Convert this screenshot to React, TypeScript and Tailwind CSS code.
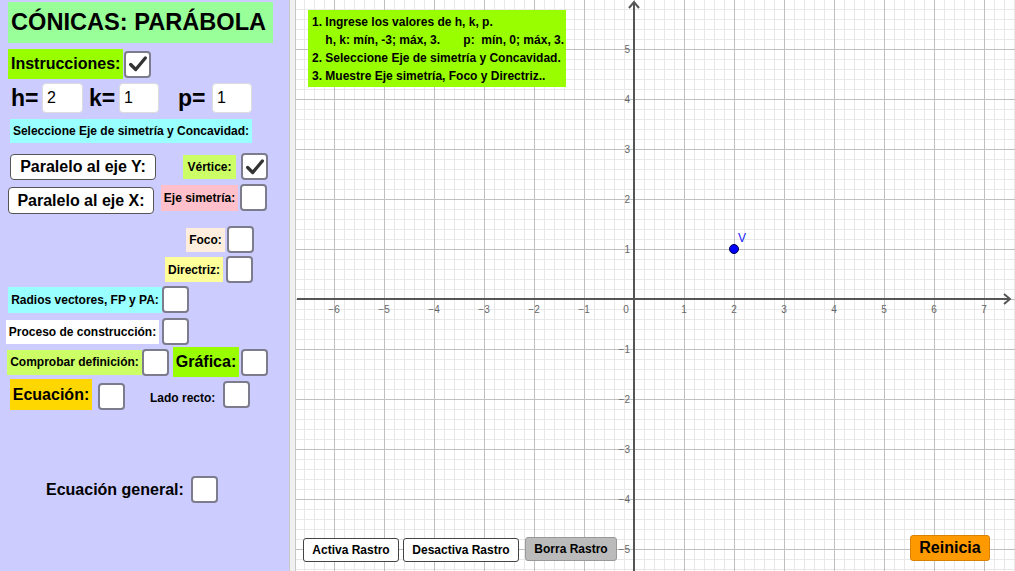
import React from 'react'

// casilla de verificación estilo GeoGebra
function Casilla({ marcada = false, className = '' }: { marcada?: boolean; className?: string }) {
    return (
        <div className={`flex h-[27px] w-[27px] shrink-0 items-center justify-center rounded-[4px] border-2 border-[#7c7c8c] bg-white ${className}`}>
            {marcada && (
                <svg viewBox="0 0 24 24" className="h-[22px] w-[22px]">
                    <polyline points="4,12.5 9.5,18 20,5.5" fill="none" stroke="#333" strokeWidth={3.6} strokeLinecap="round" strokeLinejoin="round" />
                </svg>
            )}
        </div>
    )
}

function Etiqueta({ texto, className }: { texto: string; className: string }) {
    return (
        <div className={`flex shrink-0 items-center justify-center text-[12px] font-bold text-black ${className}`}>
            {texto}
        </div>
    )
}

function Entrada({ valor, className = '' }: { valor: string; className?: string }) {
    return (
        <div className={`flex h-[30px] items-center rounded-[4px] border border-[#dcdcdc] bg-white pl-[4px] text-[16px] font-normal text-black ${className}`}>
            {valor}
        </div>
    )
}

function Grafica() {
    const W = 719
    const H = 571
    const ox = 338
    const oy = 299
    const menoresX: number[] = []
    for (let x = ox % 10; x <= W; x += 10) menoresX.push(x)
    const menoresY: number[] = []
    for (let y = oy % 10; y <= H; y += 10) menoresY.push(y)
    const mayoresX = menoresX.filter((x) => (x - ox) % 50 === 0)
    const mayoresY = menoresY.filter((y) => (y - oy) % 50 === 0)
    const etiquetasX = [-6, -5, -4, -3, -2, -1, 1, 2, 3, 4, 5, 6, 7]
    const etiquetasY = [5, 4, 3, 2, 1, -1, -2, -3, -4, -5]
    const num = (n: number) => (n < 0 ? `\u2212${-n}` : `${n}`)

    return (
        <svg width={W} height={H} className="block" fontFamily="'Liberation Sans', Arial, sans-serif">
            <g shapeRendering="crispEdges">
                {menoresX.map((x) => (
                    <line key={`mx${x}`} x1={x} y1={0} x2={x} y2={H} stroke="#e8e8e8" />
                ))}
                {menoresY.map((y) => (
                    <line key={`my${y}`} x1={0} y1={y} x2={W} y2={y} stroke="#e8e8e8" />
                ))}
                {mayoresX.map((x) => (
                    <line key={`Mx${x}`} x1={x} y1={0} x2={x} y2={H} stroke="#c0c0c0" />
                ))}
                {mayoresY.map((y) => (
                    <line key={`My${y}`} x1={0} y1={y} x2={W} y2={y} stroke="#c0c0c0" />
                ))}
                <line x1={1} y1={oy} x2={714} y2={oy} stroke="#555" strokeWidth={2} />
                <line x1={ox} y1={3} x2={ox} y2={H} stroke="#555" strokeWidth={2} />
            </g>
            {/* flechas de los ejes */}
            <polyline points={`${708},${oy - 5} ${714},${oy} ${708},${oy + 5}`} fill="none" stroke="#555" strokeWidth={2} />
            <polyline points={`${ox - 5},${8} ${ox},${2} ${ox + 5},${8}`} fill="none" stroke="#555" strokeWidth={2} />

            {etiquetasX.map((n) => (
                <text key={`tx${n}`} x={ox + n * 50} y={oy + 14} fontSize={10} fill="#666" textAnchor="middle">
                    {num(n)}
                </text>
            ))}
            <text x={ox - 8} y={oy + 14} fontSize={10} fill="#666" textAnchor="middle">0</text>
            {etiquetasY.map((n) => (
                <text key={`ty${n}`} x={ox - 4} y={oy - n * 50 + 4} fontSize={10} fill="#666" textAnchor="end">
                    {num(n)}
                </text>
            ))}

            {/* vértice V(2, 1) */}
            <circle cx={ox + 100} cy={oy - 50} r={4.5} fill="#0000ff" stroke="#000044" strokeWidth={1} />
            <text x={ox + 104} y={oy - 57} fontSize={12} fill="#2020ff">V</text>
        </svg>
    )
}

export default function App() {
    return (
        <div className="flex h-[571px] w-[1015px] overflow-hidden bg-white font-['Liberation_Sans',Arial,sans-serif] text-black">
            {/* panel de controles */}
            <div className="flex h-full w-[289px] shrink-0 flex-col bg-[#ccccff]">
                <div className="ml-[8px] mt-[2px] flex h-[41px] w-[265px] items-center bg-[#99ff99] pl-[3px] text-[23.6px] font-bold leading-none">
                    CÓNICAS: PARÁBOLA
                </div>

                <div className="mt-[6px] flex h-[30px] items-center">
                    <div className="ml-[8px] flex h-[30px] w-[115px] items-center bg-[#99ff00] pl-[3px] text-[16px] font-bold">
                        Instrucciones:
                    </div>
                    <Casilla marcada className="ml-[1px]" />
                </div>

                <div className="mt-[4px] flex h-[30px] items-center text-[23px] font-bold">
                    <span className="ml-[11px] w-[31px]">h=</span>
                    <Entrada valor="2" className="w-[41px]" />
                    <span className="ml-[6px] w-[30px]">k=</span>
                    <Entrada valor="1" className="w-[40px]" />
                    <span className="ml-[19px] w-[34px]">p=</span>
                    <Entrada valor="1" className="w-[40px]" />
                </div>

                <div className="ml-[10px] mt-[6px] flex h-[24px] w-[242px] items-center justify-center bg-[#99ffff] text-[12px] font-bold">
                    Seleccione Eje de simetría y Concavidad:
                </div>

                <div className="mt-[10px] flex h-[27px] items-center">
                    <div className="ml-[10px] flex h-[26px] w-[146px] items-center justify-center rounded-[4px] border border-[#555] bg-white text-[16px] font-bold">
                        Paralelo al eje Y:
                    </div>
                    <Etiqueta texto="Vértice:" className="ml-[27px] h-[24px] w-[53px] bg-[#ccff66]" />
                    <Casilla marcada className="ml-[5px]" />
                </div>

                <div className="mt-[4px] flex h-[30px] items-start">
                    <div className="ml-[8px] mt-[3px] flex h-[27px] w-[146px] items-center justify-center rounded-[4px] border border-[#555] bg-white text-[16px] font-bold">
                        Paralelo al eje X:
                    </div>
                    <Etiqueta texto="Eje simetría:" className="ml-[7px] mt-[1px] h-[26px] w-[77px] bg-[#ffc0cb]" />
                    <Casilla className="ml-[2px]" />
                </div>

                <div className="mt-[12px] flex h-[27px] items-center">
                    <Etiqueta texto="Foco:" className="ml-[186px] h-[24px] w-[39px] bg-[#ffeedd]" />
                    <Casilla className="ml-[2px]" />
                </div>

                <div className="mt-[3px] flex h-[27px] items-center">
                    <Etiqueta texto="Directriz:" className="ml-[165px] h-[25px] w-[58px] bg-[#ffff99]" />
                    <Casilla className="ml-[3px]" />
                </div>

                <div className="mt-[3px] flex h-[27px] items-center">
                    <Etiqueta texto="Radios vectores, FP y PA:" className="ml-[8px] h-[26px] w-[154px] bg-[#99ffff]" />
                    <Casilla />
                </div>

                <div className="mt-[5px] flex h-[27px] items-center">
                    <Etiqueta texto="Proceso de construcción:" className="ml-[6px] h-[24px] w-[153px] bg-white" />
                    <Casilla className="ml-[3px]" />
                </div>

                <div className="mt-[2px] flex h-[30px] items-center">
                    <Etiqueta texto="Comprobar definición:" className="ml-[7px] h-[25px] w-[135px] bg-[#ccff66]" />
                    <Casilla />
                    <div className="ml-[4px] flex h-[30px] w-[66px] items-center justify-center bg-[#99ff00] text-[16px] font-bold">
                        Gráfica:
                    </div>
                    <Casilla className="ml-[2px]" />
                </div>

                <div className="mt-[2px] flex h-[31px] items-start">
                    <div className="ml-[10px] flex h-[31px] w-[82px] items-center justify-center bg-[#ffd700] text-[16px] font-bold">
                        Ecuación:
                    </div>
                    <Casilla className="ml-[6px] mt-[4px]" />
                    <span className="ml-[25px] mt-[13px] text-[12px] font-bold leading-none">Lado recto:</span>
                    <Casilla className="ml-[8px] mt-[2px]" />
                </div>

                <div className="mt-[66px] flex h-[27px] items-center">
                    <span className="ml-[46px] text-[16px] font-bold">Ecuación general:</span>
                    <Casilla className="ml-[7px]" />
                </div>
            </div>

            {/* separador */}
            <div className="h-full w-[7px] shrink-0 border-l border-r border-[#c8c8c8] bg-[#f0f0f0]" />

            {/* vista gráfica */}
            <div className="relative h-full flex-1">
                <Grafica />

                <div className="absolute left-[12px] top-[10px] flex h-[77px] w-[258px] flex-col justify-center gap-[4px] bg-[#99ff00] pl-[4px] text-[12px] font-bold leading-[14px]">
                    <span>1. Ingrese los valores de h, k, p.</span>
                    <span className="whitespace-pre">{'    h, k: mín, -3; máx, 3.       p:  mín, 0; máx, 3.'}</span>
                    <span>2. Seleccione Eje de simetría y Concavidad.</span>
                    <span>3. Muestre Eje simetría, Foco y Directriz..</span>
                </div>

                <div className="absolute left-[7px] top-[537px] flex items-start gap-[4px] text-[12px] font-bold">
                    <div className="mt-[1px] flex h-[24px] w-[96px] items-center justify-center rounded-[3px] border border-[#444] bg-white">
                        Activa Rastro
                    </div>
                    <div className="mt-[1px] flex h-[24px] w-[116px] items-center justify-center rounded-[3px] border border-[#444] bg-white">
                        Desactiva Rastro
                    </div>
                    <div className="ml-[2px] flex h-[24px] w-[92px] items-center justify-center rounded-[3px] border border-[#999] bg-[#bbbbbb]">
                        Borra Rastro
                    </div>
                </div>

                <div className="absolute left-[614px] top-[535px] flex h-[26px] w-[80px] items-center justify-center rounded-[3px] border border-[#d98200] bg-[#ff9900] text-[16px] font-bold">
                    Reinicia
                </div>
            </div>
        </div>
    )
}
